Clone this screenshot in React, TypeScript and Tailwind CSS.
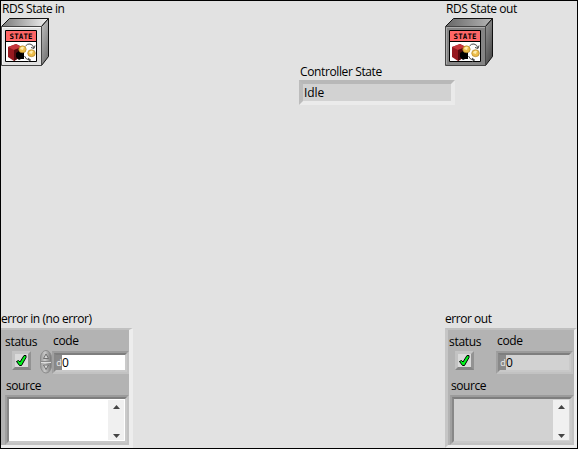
import type { ReactNode } from "react";

function Label({ className = "", children }: { className?: string; children: ReactNode }) {
  return <div className={`h-4 whitespace-nowrap text-[12px] leading-4 ${className}`}>{children}</div>;
}

function StateIcon({ dark = false }: { dark?: boolean }) {
  const id = dark ? "out" : "in";
  return (
    <svg className="block" width="49" height="48" viewBox="0 0 49 48">
      <defs>
        <linearGradient id={`top-${id}`} x1="0" x2="1" y1="0" y2="0">
          <stop offset="0" stopColor={dark ? "#666" : "#777"} />
          <stop offset="1" stopColor={dark ? "#b5b5b5" : "#f4f4f4"} />
        </linearGradient>
        <linearGradient id={`side-${id}`} x1="0" x2="0.5" y1="0" y2="1">
          <stop offset="0" stopColor={dark ? "#999" : "#c4c4c4"} />
          <stop offset="1" stopColor={dark ? "#4d4d4d" : "#777"} />
        </linearGradient>
      </defs>
      <path d="M.5 8.5 8.5.5h39l-7 8z" fill={`url(#top-${id})`} stroke="#111" />
      <path d="M40.500 8.500 47.500.500v38l-7 9z" fill={`url(#side-${id})`} stroke="#111" />
      <path d="M.5 8.500h40v39H.5z" fill={dark ? "#858585" : "#e1e1e1"} stroke="#444" />
      <path d="M1.500 46V9.500H40" fill="none" stroke={dark ? "#aaa" : "#f5f5f5"} />
      <path d="M4.500 12.500h31v31h-31z" fill="#fff" stroke="#000" />
      <path d="M5 13h30v10H5z" fill="#ff6666" />
      <path d="M5 23.500h30" stroke="#000" />
      <text x="8.500" y="21" textLength="23" lengthAdjust="spacing" fontFamily="DejaVu Sans Mono, monospace" fontSize="7.400" fontWeight="700">STATE</text>
      <path d="m7 29 8-3 6 3v9l-8 5-6-4z" fill="#96191f" />
      <path d="m7 29 8-3 6 3-8 3z" fill="#c5353b" />
      <path d="m13 32 8-3v9l-8 5z" fill="#540a0e" />
      <path d="m15 35 3-2h5v8h-3l-2 1-3-3z" fill="#000" />
      <path d="M24.500 28q2-2.500 4.500-2 3 .5 4 4m-3-.5 3 1 1-3M23.500 38q1 4 6 4m-2.500-2 2.500 2-2.500 1.500" fill="none" stroke="#484848" strokeWidth="1" />
      <ellipse cx="21.500" cy="31.300" rx="3.700" ry="3.500" fill="#edbd49" stroke="#a87a22" strokeWidth=".6" />
      <ellipse cx="30.500" cy="35.200" rx="3.800" ry="3.500" fill="#edbd49" stroke="#a87a22" strokeWidth=".6" />
      <path d="M19 31q1-3 4-2l-1 3zM28 35q1-3 4-2l-1 3z" fill="#ffedaf" />
    </svg>
  );
}

function Led() {
  return (
    <div className="h-[19px] w-[19px] border-[3px] border-t-[#c4c4c4] border-r-[#929292] border-b-[#858585] border-l-[#c2c2c2] bg-[#dadada]">
      <svg className="block" width="13" height="13" viewBox="0 0 13 13">
        <path d="M1.500 7.500 3.500 6.500 5 8 9 1.500h2v2L6.500 11.500h-2z" fill="#00f51c" stroke="#000" />
      </svg>
    </div>
  );
}

function Spinner() {
  return (
    <svg className="block" width="12" height="24" viewBox="0 0 12 24">
      <defs>
        <linearGradient id="spin">
          <stop offset="0" stopColor="#999" />
          <stop offset=".4" stopColor="#cacaca" />
          <stop offset="1" stopColor="#747474" />
        </linearGradient>
      </defs>
      <rect x=".5" y=".5" width="11" height="22.500" rx="5.500" ry="7.500" fill="url(#spin)" stroke="#8c8c8c" />
      <path d="M1 11.500h10" stroke="#888" />
      <path d="M1 12.500h10" stroke="#ddd" />
      <path d="m3.500 8.500 2.500-4.500 2.500 4.500zM3.500 15h5L6 19.500z" fill="#d8d8d8" stroke="#666" strokeWidth=".9" />
    </svg>
  );
}

function ScrollBar() {
  return (
    <div className="my-px mr-px flex w-[16px] flex-col items-center justify-between bg-[#f0f0f0] pt-[5px] pb-[2px]">
      <svg width="7" height="4" viewBox="0 0 7 4"><path d="m0 4 3.500-4L7 4z" fill="#444" /></svg>
      <svg width="7" height="4" viewBox="0 0 7 4"><path d="m0 0 3.500 4L7 0z" fill="#444" /></svg>
    </div>
  );
}

/* Two nested rings give the sunken bevel its graded edge. */
function Sunken({ className, fill, children }: { className: string; fill: string; children: ReactNode }) {
  return (
    <div className={`flex border-2 border-t-[#9b9b9b] border-r-[#c2c2c2] border-b-[#c2c2c2] border-l-[#a0a0a0] ${className}`}>
      <div className={`flex grow border-2 border-t-[#7e7e7e] border-r-[#cacaca] border-b-[#c8c8c8] border-l-[#888888] ${fill}`}>
        {children}
      </div>
    </div>
  );
}

function ErrorCluster({ output = false }: { output?: boolean }) {
  const fill = output ? "bg-[#d2d2d2]" : "bg-white";
  return (
    <div className={`h-[120px] w-[132px] border-t-2 border-b-[3px] border-t-[#c0c0c0] border-b-[#ededed] border-l-[#c6c6c6] border-r-[#ededed] bg-[#b3b3b3] ${output ? "border-r-[3px] border-l-[3px] pl-[2px]" : "border-r-4 pl-1"}`}>
      <div className="flex h-[48px] pt-[3px]">
        <div className={output ? "w-[46px]" : "w-[35px]"}>
          <Label className={`mt-px -tracking-[0.300px] ${output ? "-ml-px" : ""}`}>status</Label>
          <div className={output ? "pt-px pl-[5px]" : "pt-px pl-[7px]"}><Led /></div>
        </div>
        {!output && <div className="pt-[17px]"><Spinner /></div>}
        <div>
          <Label className="pl-px -tracking-[0.350px]">code</Label>
          <Sunken className="mt-[2px] h-[23px] w-[77px]" fill={fill}>
            <span className={`w-[6px] bg-[#8a8a8a] text-center text-[9px] leading-[15px] text-[#eee]`}>d</span>
            <span className="text-[12px] leading-[15px]">0</span>
          </Sunken>
        </div>
      </div>
      <Label className="pl-px -tracking-[0.450px]">source</Label>
      <Sunken className="mt-px h-[50px] w-[124px]" fill={fill}>
        <div className="grow" />
        <ScrollBar />
      </Sunken>
    </div>
  );
}

export default function App() {
  return (
    <main className="flex h-[449px] w-[578px] flex-col justify-between overflow-hidden border border-black bg-[#e2e2e2] font-['Open_Sans','Noto_Sans',sans-serif] text-black">
      <div className="flex">
        <section className="w-[298px]">
          <Label className="pl-px -tracking-[0.450px]">RDS State in</Label>
          <div className="pt-px"><StateIcon /></div>
        </section>
        <section className="w-[146px] pt-[63px]">
          <Label className="pl-[1px] -tracking-[0.380px]">Controller State</Label>
          <div className="flex h-[25px] w-[156px] items-center border-4 border-t-[#b8b8b8] border-r-[#eaeaea] border-b-[#ebebeb] border-l-[#bcbcbc] bg-[#d2d2d2] pl-[1px]">
            <Label className="-tracking-[0.100px]">Idle</Label>
          </div>
        </section>
        <section>
          <Label className="pl-px -tracking-[0.420px]">RDS State out</Label>
          <div className="pt-px"><StateIcon dark /></div>
        </section>
      </div>
      <div className="flex justify-between">
        <section>
          <Label className="mb-[1px] -tracking-[0.430px]">error in (no error)</Label>
          <ErrorCluster />
        </section>
        <section>
          <Label className="mb-[1px] -tracking-[0.450px]">error out</Label>
          <ErrorCluster output />
        </section>
      </div>
    </main>
  );
}
